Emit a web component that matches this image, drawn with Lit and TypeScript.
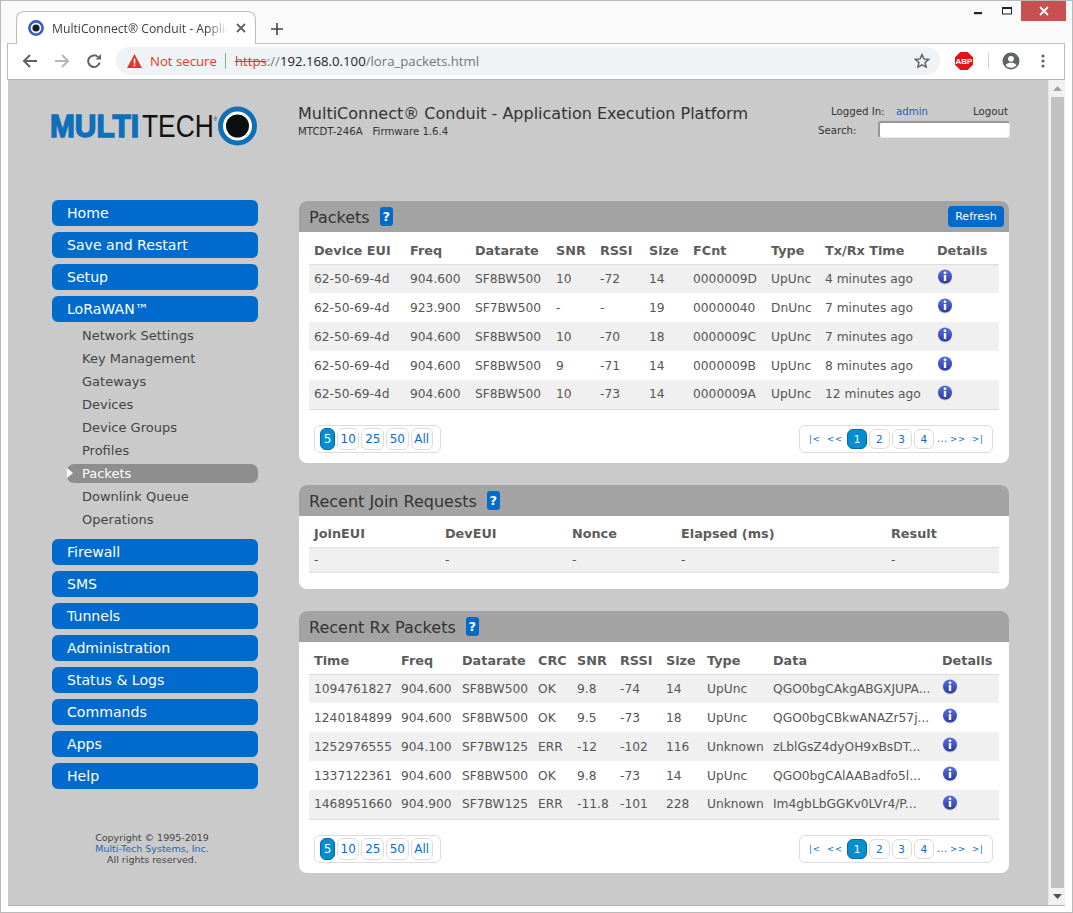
import { css, html, LitElement, nothing } from 'lit';
import { customElement } from 'lit/decorators.js';

const NAV_TOP = ['Home', 'Save and Restart', 'Setup', 'LoRaWAN™'];
const NAV_SUB = ['Network Settings', 'Key Management', 'Gateways', 'Devices', 'Device Groups', 'Profiles', 'Packets', 'Downlink Queue', 'Operations'];
const NAV_BOTTOM = ['Firewall', 'SMS', 'Tunnels', 'Administration', 'Status & Logs', 'Commands', 'Apps', 'Help'];

const PACKET_COLS = [96, 65, 81, 44, 49, 44, 78, 54, 112, 67];
const PACKET_HEAD = ['Device EUI', 'Freq', 'Datarate', 'SNR', 'RSSI', 'Size', 'FCnt', 'Type', 'Tx/Rx Time', 'Details'];
const PACKET_ROWS = [
  ['62-50-69-4d', '904.600', 'SF8BW500', '10', '-72', '14', '0000009D', 'UpUnc', '4 minutes ago'],
  ['62-50-69-4d', '923.900', 'SF7BW500', '-', '-', '19', '00000040', 'DnUnc', '7 minutes ago'],
  ['62-50-69-4d', '904.600', 'SF8BW500', '10', '-70', '18', '0000009C', 'UpUnc', '7 minutes ago'],
  ['62-50-69-4d', '904.600', 'SF8BW500', '9', '-71', '14', '0000009B', 'UpUnc', '8 minutes ago'],
  ['62-50-69-4d', '904.600', 'SF8BW500', '10', '-73', '14', '0000009A', 'UpUnc', '12 minutes ago'],
];

const JOIN_COLS = [131, 127, 109, 210, 113];
const JOIN_HEAD = ['JoinEUI', 'DevEUI', 'Nonce', 'Elapsed (ms)', 'Result'];
const JOIN_ROWS = [['-', '-', '-', '-', '-']];

const RX_COLS = [87, 61, 76, 39, 43, 46, 41, 66, 169, 62];
const RX_HEAD = ['Time', 'Freq', 'Datarate', 'CRC', 'SNR', 'RSSI', 'Size', 'Type', 'Data', 'Details'];
const RX_ROWS = [
  ['1094761827', '904.600', 'SF8BW500', 'OK', '9.8', '-74', '14', 'UpUnc', 'QGO0bgCAkgABGXJUPA...'],
  ['1240184899', '904.600', 'SF8BW500', 'OK', '9.5', '-73', '18', 'UpUnc', 'QGO0bgCBkwANAZr57j...'],
  ['1252976555', '904.100', 'SF7BW125', 'ERR', '-12', '-102', '116', 'Unknown', 'zLblGsZ4dyOH9xBsDT...'],
  ['1337122361', '904.600', 'SF8BW500', 'OK', '9.8', '-73', '14', 'UpUnc', 'QGO0bgCAlAABadfo5l...'],
  ['1468951660', '904.900', 'SF7BW125', 'ERR', '-11.8', '-101', '228', 'Unknown', 'Im4gbLbGGKv0LVr4/P...'],
];

@customElement('app-root')
export class AppRoot extends LitElement {
  static styles = css`
    :host {
      display: block;
      width: 1073px;
      height: 913px;
      overflow: hidden;
      font-family: 'DejaVu Sans', Verdana, sans-serif;
    }
    .window {
      box-sizing: border-box;
      height: 913px;
      border: 1px solid #b9b9b9;
      background: #fff;
      display: flex;
      flex-direction: column;
      padding: 0 7px 6px 6px;
    }
    /* browser chrome */
    .tabs {
      height: 42px;
      margin: 0 -7px 0 -6px;
      background: #fafafa;
      display: flex;
      align-items: flex-end;
      padding-left: 15px;
      position: relative;
    }
    .tab {
      box-sizing: border-box;
      width: 240px;
      height: 33px;
      background: #fff;
      border: 1px solid #bdbdbd;
      border-bottom: none;
      border-radius: 8px 8px 0 0;
      display: flex;
      align-items: center;
      padding-left: 11px;
      margin-bottom: -1px;
      position: relative;
      z-index: 1;
    }
    .tab-title {
      margin-left: 8px;
      width: 176px;
      overflow: hidden;
      white-space: nowrap;
      font: 12.2px 'Open Sans', sans-serif;
      color: #3c4043;
      -webkit-mask-image: linear-gradient(90deg, #000 88%, transparent);
      mask-image: linear-gradient(90deg, #000 88%, transparent);
    }
    .tab-close {
      margin-left: 8px;
      display: flex;
    }
    .new-tab {
      margin: 0 0 8px 15px;
      display: flex;
    }
    .win-controls {
      position: absolute;
      top: 0;
      right: 6px;
      display: flex;
      align-items: flex-start;
    }
    .win-btn {
      width: 29px;
      height: 20px;
      display: flex;
      align-items: center;
      justify-content: center;
    }
    .win-close {
      width: 45px;
      background: #c75050;
      margin-left: 0;
    }
    .toolbar {
      box-sizing: border-box;
      height: 37px;
      padding-bottom: 2px;
      border: 1px solid #bdbdbd;
      border-bottom-color: #b4b4b4;
      border-top-color: #c4c4c4;
      background: #fff;
      display: flex;
      align-items: center;
      margin-right: 0;
      flex: none;
    }
    .tool {
      width: 32px;
      display: flex;
      justify-content: center;
      flex: none;
    }
    .tool.first {
      margin-left: 6px;
    }
    .omnibox {
      margin-left: 6px;
      width: 824px;
      height: 28px;
      box-sizing: border-box;
      border-radius: 14px;
      background: #f0f3f5;
      display: flex;
      align-items: center;
      padding-left: 11px;
      font: 13.2px 'Open Sans', sans-serif;
      flex: none;
    }
    .not-secure {
      color: #e5352b;
      margin-left: 8px;
      white-space: nowrap;
    }
    .divider {
      width: 1px;
      height: 16px;
      background: #9aa0a6;
      margin: 0 9px 0 8px;
    }
    .url {
      color: #70757a;
      white-space: nowrap;
    }
    .url s {
      color: #e5352b;
    }
    .url b {
      font-weight: 400;
      color: #202124;
    }
    .star {
      margin-left: auto;
      margin-right: 10px;
      display: flex;
    }
    .abp {
      margin-left: 15px;
      display: flex;
    }
    .tool-sep {
      width: 1px;
      height: 16px;
      background: #d0d0d0;
      margin: 0 13px 0 15px;
    }
    .avatar {
      display: flex;
    }
    .dots {
      margin-left: 21px;
      display: flex;
    }

    /* page */
    .viewport {
      flex: 1;
      min-height: 0;
      display: flex;
      overflow: hidden;
      background: #cacaca;
      border-bottom: 1px solid #b4b4b4;
      margin-left: 1px;
    }
    .page {
      flex: 1;
      padding-left: 44px;
      display: grid;
      grid-template-columns: 206px 710px;
      grid-template-rows: 120px auto;
      column-gap: 41px;
      align-content: start;
    }
    .scrollbar {
      width: 17px;
      background: #f1f1f1;
      display: flex;
      flex-direction: column;
      align-items: center;
      flex: none;
      border-left: 1px solid #e4e4e4;
      box-sizing: border-box;
    }
    .arrow {
      height: 17px;
      display: flex;
      align-items: center;
      justify-content: center;
      flex: none;
    }
    .thumb {
      flex: 1;
      width: 13px;
      background: #c1c1c1;
    }
    .logo {
      margin: 24px 0 0 -3px;
      display: block;
    }
    .top {
      display: flex;
      justify-content: space-between;
      padding-top: 24px;
      margin: 0 -1px;
    }
    .product {
      font-size: 16px;
      line-height: 19px;
      color: #333;
      white-space: nowrap;
    }
    .model {
      font-size: 10.2px;
      line-height: 11px;
      margin-top: 3px;
      color: #333;
      white-space: pre;
    }
    .login {
      display: grid;
      grid-template-columns: 60px 78px 1fr;
      grid-template-rows: 14px 22px;
      align-items: center;
      width: 192px;
      font-size: 10.2px;
      color: #333;
    }
    .login .logged {
      margin-left: 13px;
      white-space: nowrap;
    }
    .login a {
      color: #1b62b8;
      text-decoration: none;
      margin-left: 18px;
    }
    .login .logout {
      color: #333;
      margin: 0;
      justify-self: end;
      margin-right: 2px;
    }
    .search-label {
      padding-top: 2px;
    }
    .search-input {
      grid-column: 2 / 4;
      justify-self: end;
      box-sizing: border-box;
      width: 132px;
      height: 17px;
      background: #fff;
      border: 1px solid #e8e8e8;
      border-top: 2px solid #979797;
      border-left: 2px solid #979797;
      border-radius: 3px;
    }

    /* sidebar */
    nav {
      display: flex;
      flex-direction: column;
    }
    .main-item {
      height: 26px;
      line-height: 26px;
      border-radius: 6px;
      background: #006bcc;
      color: #fff;
      font-size: 14.1px;
      padding-left: 15px;
      margin-bottom: 6px;
    }
    .sub {
      display: flex;
      flex-direction: column;
      margin: -2px 0 6px 15px;
    }
    .sub-item {
      height: 19px;
      line-height: 19px;
      margin-bottom: 4px;
      padding-left: 15px;
      font-size: 13px;
      color: #444;
      border-radius: 7px;
      position: relative;
    }
    .sub-item.active {
      background: #8e8e8e;
      color: #fff;
    }
    .sub-item.active::before {
      content: '';
      position: absolute;
      left: 0;
      top: 4px;
      border-left: 6px solid #fff;
      border-top: 5px solid transparent;
      border-bottom: 5px solid transparent;
    }
    .copyright {
      margin-top: 37px;
      text-align: center;
      font-size: 9.5px;
      line-height: 11px;
      color: #444;
      width: 200px;
    }
    .copyright a {
      color: #2763b8;
      text-decoration: none;
    }

    /* panels */
    .panels {
      padding-top: 1px;
      display: flex;
      flex-direction: column;
      gap: 22px;
    }
    .panel {
      background: #fff;
      border-radius: 8px;
      overflow: hidden;
    }
    .panel-head {
      box-sizing: border-box;
      height: 31px;
      background: #a3a3a3;
      display: flex;
      align-items: center;
      padding: 2px 5px 0 10px;
      color: #333;
      font-size: 16px;
    }
    .help {
      margin: -2px 0 0 10px;
      width: 13px;
      height: 19px;
      line-height: 19px;
      border-radius: 3px;
      background: #006bcc;
      color: #fff;
      font-size: 13px;
      font-weight: 700;
      text-align: center;
    }
    .refresh {
      margin: -2px 0 0 auto;
      box-sizing: border-box;
      width: 56px;
      height: 21px;
      line-height: 21px;
      border-radius: 4px;
      background: #006bcc;
      color: #fff;
      font-size: 11px;
      text-align: center;
    }
    .panel-body {
      padding: 0 10px 16px;
    }
    .panel-body.pagers-below {
      padding-bottom: 10px;
    }
    table {
      width: 690px;
      table-layout: fixed;
      border-collapse: collapse;
      border-bottom: 1px solid #ddd;
      color: #555;
      font-size: 12.25px;
    }
    th {
      height: 32px;
      padding: 5px 0 0 5px;
      box-sizing: border-box;
      text-align: left;
      font-size: 12.8px;
      color: #5c5c5c;
      border-bottom: 1px solid #ddd;
      white-space: nowrap;
    }
    td {
      height: 29px;
      padding: 0 0 0 5px;
      box-sizing: border-box;
      white-space: nowrap;
    }
    .compact td {
      height: 25px;
    }
    tbody tr:nth-child(odd) {
      background: #f0f0f0;
    }
    .info {
      display: block;
      margin: -3px 0 0 0;
    }
    .pagers {
      display: flex;
      justify-content: space-between;
      margin: 15px 6px 0 5px;
    }
    .pager {
      box-sizing: border-box;
      height: 28px;
      border: 1px solid #ddd;
      border-radius: 6px;
      display: flex;
      align-items: center;
      padding: 0 7px 0 5px;
      font-size: 11.5px;
      color: #0a6cc8;
    }
    .size-pager {
      gap: 2px;
    }
    .size-pager span {
      box-sizing: border-box;
      height: 22px;
      line-height: 20px;
      border: 1px solid #ddd;
      border-radius: 6px;
      text-align: center;
      font-size: 12px;
      padding: 0 2.65px;
    }
    .size-pager span.on,
    .page-pager span.on {
      background: #0090d0;
      border-color: #0a64a8;
      color: #fff;
    }
    .page-pager {
      padding: 0 9px;
      font-size: 8.5px;
    }
    .page-pager span {
      box-sizing: border-box;
      width: 20.25px;
      height: 20px;
      line-height: 18px;
      margin-right: 2px;
      border: 1px solid #ddd;
      border-radius: 6px;
      text-align: center;
      font-size: 10.5px;
    }
    .page-pager i {
      font-style: normal;
      white-space: pre;
      letter-spacing: 1px;
    }
    .page-pager i.a { width: 18px; }
    .page-pager i.b { width: 20px; }
    .page-pager i.c { width: 13px; margin-left: 1px; font-size: 10px; letter-spacing: 0.3px; }
    .page-pager i.d { width: 22px; }
    .page-pager i.e { width: 11px; }
  `;

  private infoIcon() {
    return html`<svg class="info" width="16" height="16" viewBox="0 0 16 16">
      <defs>
        <linearGradient id="infoFill" x1="0" y1="0" x2="0" y2="1">
          <stop offset="0" stop-color="#5b70dc" />
          <stop offset="1" stop-color="#2a3aa8" />
        </linearGradient>
      </defs>
      <ellipse cx="8" cy="9" rx="7" ry="6.5" fill="#999" opacity=".5" />
      <circle cx="8" cy="7.5" r="7" fill="url(#infoFill)" />
      <circle cx="8" cy="3.8" r="1.4" fill="#fff" />
      <rect x="6.8" y="6" width="2.4" height="6" fill="#fff" />
    </svg>`;
  }

  private dataTable(cols: number[], head: string[], rows: string[][], details: boolean, compact = false) {
    return html`<table class=${compact ? 'compact' : ''}>
      <colgroup>${cols.map((w) => html`<col style="width:${w}px" />`)}</colgroup>
      <thead><tr>${head.map((h) => html`<th>${h}</th>`)}</tr></thead>
      <tbody>
        ${rows.map(
          (r) => html`<tr>
            ${r.map((c) => html`<td>${c}</td>`)}
            ${details ? html`<td>${this.infoIcon()}</td>` : nothing}
          </tr>`,
        )}
      </tbody>
    </table>`;
  }

  private pagers() {
    return html`<div class="pagers">
      <div class="pager size-pager">
        <span class="on">5</span><span>10</span><span>25</span><span>50</span><span>All</span>
      </div>
      <div class="pager page-pager">
        <i class="a">|&lt;</i><i class="b">&lt;&lt;</i>
        <span class="on">1</span><span>2</span><span>3</span><span>4</span>
        <i class="c">...</i><i class="d">&gt;&gt;</i><i class="e">&gt;|</i>
      </div>
    </div>`;
  }

  private chrome() {
    return html`
      <div class="tabs">
        <div class="tab">
          <svg width="16" height="16" viewBox="0 0 16 16">
            <circle cx="8" cy="8" r="6.6" fill="#fff" stroke="#2f5fc8" stroke-width="2.6" />
            <circle cx="8" cy="8" r="3.6" fill="#1a1a2a" />
          </svg>
          <div class="tab-title">MultiConnect® Conduit - Application Execution Platform</div>
          <svg class="tab-close" width="10" height="10" viewBox="0 0 10 10">
            <path d="M1 1l8 8M9 1l-8 8" stroke="#5f6368" stroke-width="1.8" />
          </svg>
        </div>
        <svg class="new-tab" width="12" height="12" viewBox="0 0 12 12">
          <path d="M6 0v12M0 6h12" stroke="#444" stroke-width="1.6" />
        </svg>
        <div class="win-controls">
          <div class="win-btn">
            <svg width="10" height="10" viewBox="0 0 10 10"><rect x="1" y="6" width="8" height="2.2" fill="#222" /></svg>
          </div>
          <div class="win-btn">
            <svg width="12" height="10" viewBox="0 0 12 10"><rect x="1.5" y="1.5" width="9" height="6.5" fill="none" stroke="#222" stroke-width="1" /><rect x="1" y="1" width="10" height="2" fill="#222" /></svg>
          </div>
          <div class="win-btn win-close">
            <svg width="10" height="10" viewBox="0 0 10 10"><path d="M1 1l8 8M9 1l-8 8" stroke="#fff" stroke-width="1.8" /></svg>
          </div>
        </div>
      </div>
      <div class="toolbar">
        <div class="tool first">
          <svg width="16" height="16" viewBox="0 0 16 16"><path d="M15 8H2M8 2L2 8l6 6" fill="none" stroke="#5f6368" stroke-width="2" /></svg>
        </div>
        <div class="tool">
          <svg width="16" height="16" viewBox="0 0 16 16"><path d="M1 8h13M8 2l6 6-6 6" fill="none" stroke="#b4b7ba" stroke-width="2" /></svg>
        </div>
        <div class="tool">
          <svg width="16" height="16" viewBox="0 0 16 16"><path d="M13.6 9.5A5.8 5.8 0 1 1 12 4" fill="none" stroke="#5f6368" stroke-width="2" /><path d="M9.5 6.5H15V1z" fill="#5f6368" /></svg>
        </div>
        <div class="omnibox">
          <svg width="15" height="14" viewBox="0 0 15 14"><path d="M7.5 0L15 14H0z" fill="#e5352b" /><rect x="6.7" y="4.6" width="1.6" height="5" fill="#fff" /><rect x="6.7" y="10.6" width="1.6" height="1.7" fill="#fff" /></svg>
          <span class="not-secure">Not secure</span>
          <span class="divider"></span>
          <span class="url"><s>https</s>://<b>192.168.0.100</b>/lora_packets.html</span>
          <svg class="star" width="16" height="16" viewBox="0 0 16 16"><path d="M8 1.6l1.9 4.3 4.7.5-3.5 3.1 1 4.6L8 11.8l-4.1 2.3 1-4.6L1.4 6.400l4.700-.5z" fill="none" stroke="#5f6368" stroke-width="1.5" /></svg>
        </div>
        <svg class="abp" width="18" height="18" viewBox="0 0 18 18">
          <path d="M5.300 0h7.400L18 5.300v7.400L12.700 18H5.300L0 12.700V5.300z" fill="#e0141b" />
          <text x="9" y="12" text-anchor="middle" font-family="Liberation Sans" font-size="8" font-weight="700" fill="#fff">ABP</text>
        </svg>
        <span class="tool-sep"></span>
        <svg class="avatar" width="18" height="18" viewBox="0 0 18 18">
          <circle cx="9" cy="9" r="8.500" fill="#5f6368" />
          <circle cx="9" cy="6.800" r="2.900" fill="#fff" />
          <path d="M3.500 13.300C4.800 11.200 7 10.700 9 10.700s4.200.5 5.500 2.600A6.800 6.800 0 0 1 9 15.800a6.800 6.800 0 0 1-5.500-2.500z" fill="#fff" />
        </svg>
        <svg class="dots" width="4" height="14" viewBox="0 0 4 14">
          <circle cx="2" cy="2" r="1.600" fill="#5f6368" /><circle cx="2" cy="7" r="1.600" fill="#5f6368" /><circle cx="2" cy="12" r="1.600" fill="#5f6368" />
        </svg>
      </div>
    `;
  }

  private logo() {
    return html`<svg class="logo" width="211" height="44" viewBox="0 0 211 44">
      <circle cx="188.500" cy="22" r="19.500" fill="#0f6fb8" />
      <circle cx="188.500" cy="22" r="14.500" fill="#fff" />
      <circle cx="188.500" cy="22" r="11.500" fill="#0b0f10" />
      <text x="1" y="33" font-family="Liberation Sans" font-size="30.500" font-weight="700" fill="#0f6fb8" stroke="#0f6fb8" stroke-width="1.400" textLength="89" lengthAdjust="spacingAndGlyphs">MULTI</text>
      <text x="93" y="33" font-family="Liberation Sans" font-size="30.500" fill="#111" textLength="75" lengthAdjust="spacingAndGlyphs">TECH<tspan font-size="5" dy="-16">®</tspan></text>
    </svg>`;
  }

  render() {
    return html`<div class="window">
      ${this.chrome()}
      <div class="viewport">
        <div class="page">
          <div>${this.logo()}</div>
          <div class="top">
            <div>
              <div class="product">MultiConnect® Conduit - Application Execution Platform</div>
              <div class="model">MTCDT-246A   Firmware 1.6.4</div>
            </div>
            <div class="login">
              <span class="logged">Logged In:</span><a>admin</a><a class="logout">Logout</a>
              <span class="search-label">Search:</span><span class="search-input"></span>
            </div>
          </div>
          <nav>
            ${NAV_TOP.map((n) => html`<div class="main-item">${n}</div>`)}
            <div class="sub">
              ${NAV_SUB.map((n) => html`<div class="sub-item ${n === 'Packets' ? 'active' : ''}">${n}</div>`)}
            </div>
            ${NAV_BOTTOM.map((n) => html`<div class="main-item">${n}</div>`)}
            <div class="copyright">Copyright © 1995-2019<br /><a>Multi-Tech Systems, Inc.</a><br />All rights reserved.</div>
          </nav>
          <div class="panels">
            <section class="panel">
              <div class="panel-head">Packets<span class="help">?</span><span class="refresh">Refresh</span></div>
              <div class="panel-body pagers-below">
                ${this.dataTable(PACKET_COLS, PACKET_HEAD, PACKET_ROWS, true)}
                ${this.pagers()}
              </div>
            </section>
            <section class="panel">
              <div class="panel-head">Recent Join Requests<span class="help">?</span></div>
              <div class="panel-body">${this.dataTable(JOIN_COLS, JOIN_HEAD, JOIN_ROWS, false, true)}</div>
            </section>
            <section class="panel">
              <div class="panel-head">Recent Rx Packets<span class="help">?</span></div>
              <div class="panel-body pagers-below">
                ${this.dataTable(RX_COLS, RX_HEAD, RX_ROWS, true)}
                ${this.pagers()}
              </div>
            </section>
          </div>
        </div>
        <div class="scrollbar">
          <div class="arrow"><svg width="9" height="5" viewBox="0 0 9 5"><path d="M4.500 0L9 5H0z" fill="#a3a3a3" /></svg></div>
          <div class="thumb"></div>
          <div class="arrow"><svg width="9" height="5" viewBox="0 0 9 5"><path d="M4.500 5L9 0H0z" fill="#505050" /></svg></div>
        </div>
      </div>
    </div>`;
  }
}
